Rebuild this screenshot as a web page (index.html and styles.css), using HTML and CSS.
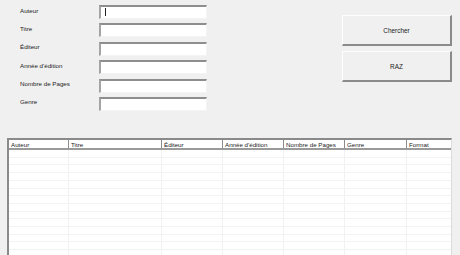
FILE: index.html
```html
<!DOCTYPE html>
<html lang="fr">
<head>
<meta charset="utf-8">
<title>Recherche</title>
<link rel="stylesheet" href="styles.css">
</head>
<body>
<div class="window">
  <div class="top">
    <div class="form">
      <label class="lbl">Auteur</label><div class="field"><span class="caret"></span></div>
      <label class="lbl">Titre</label><div class="field"></div>
      <label class="lbl">Éditeur</label><div class="field"></div>
      <label class="lbl">Année d'édition</label><div class="field"></div>
      <label class="lbl">Nombre de Pages</label><div class="field"></div>
      <label class="lbl">Genre</label><div class="field"></div>
    </div>
    <div class="buttons">
      <div class="btn">Chercher</div>
      <div class="btn">RAZ</div>
    </div>
  </div>
  <div class="list">
    <div class="head">
      <div class="hc">Auteur</div>
      <div class="hc">Titre</div>
      <div class="hc">Éditeur</div>
      <div class="hc">Année d'édition</div>
      <div class="hc">Nombre de Pages</div>
      <div class="hc">Genre</div>
      <div class="hc last">Format</div>
    </div>
    <div class="body">
      <div class="bc"></div><div class="bc"></div><div class="bc"></div><div class="bc"></div><div class="bc"></div><div class="bc"></div><div class="bc last"></div>
    </div>
  </div>
</div>
</body>
</html>
```
FILE: styles.css
```css
* { box-sizing: border-box; }
html, body { margin: 0; padding: 0; }
body {
  width: 460px;
  height: 255px;
  overflow: hidden;
  background: #f0f0f0;
  font-family: "Liberation Sans", Arial, sans-serif;
  font-size: 6.2px;
  color: #1a1a1a;
}
.window { display: flex; flex-direction: column; height: 255px; }
.top { display: flex; justify-content: space-between; height: 138px; }
.form {
  display: grid;
  grid-template-columns: 79px 108px;
  grid-auto-rows: 14px;
  row-gap: 4.4px;
  padding: 5px 0 0 20px;
  align-content: start;
}
.lbl { display: flex; align-items: center; padding-bottom: 4px; }
.field {
  background: #fff;
  border-top: 2px solid #8e8e8e;
  border-left: 2px solid #a4a4a4;
  border-right: 1px solid #f4f4f4;
  border-bottom: 1px solid #f4f4f4;
  position: relative;
}
.caret {
  position: absolute;
  left: 4px;
  top: 1px;
  width: 1px;
  height: 8px;
  background: #222;
}
.buttons {
  display: flex;
  flex-direction: column;
  gap: 5px;
  padding: 15px 8px 0 0;
}
.btn {
  width: 110px;
  height: 31px;
  display: flex;
  align-items: center;
  justify-content: center;
  background: #f0f0f0;
  border-top: 1px solid #fdfdfd;
  border-left: 1px solid #fdfdfd;
  border-right: 2px solid #8a8a8a;
  border-bottom: 2px solid #8a8a8a;
  font-size: 6.4px;
}
.list {
  margin-left: 7px;
  width: 445px;
  flex: 1;
  display: flex;
  flex-direction: column;
  background: #fff;
  border-top: 2px solid #8a8a8a;
  border-left: 2px solid #8a8a8a;
  border-right: 1px solid #dcdcdc;
}
.head, .body {
  display: grid;
  grid-template-columns: 60px 93px 61px 61px 61px 62px 1fr;
}
.head {
  height: 10px;
  border-bottom: 2px solid #9a9a9a;
}
.hc {
  border-right: 1px solid #8c8c8c;
  padding-left: 2px;
  display: flex;
  align-items: center;
  white-space: nowrap;
  overflow: hidden;
}
.hc.last { border-right: none; }
.body {
  flex: 1;
  background: repeating-linear-gradient(to bottom, #fff 0, #fff 6.7px, #f3f3f3 6.7px, #f3f3f3 7.7px);
}
.bc { border-right: 1px solid #f2f2f2; }
.bc.last { border-right: none; }
```
